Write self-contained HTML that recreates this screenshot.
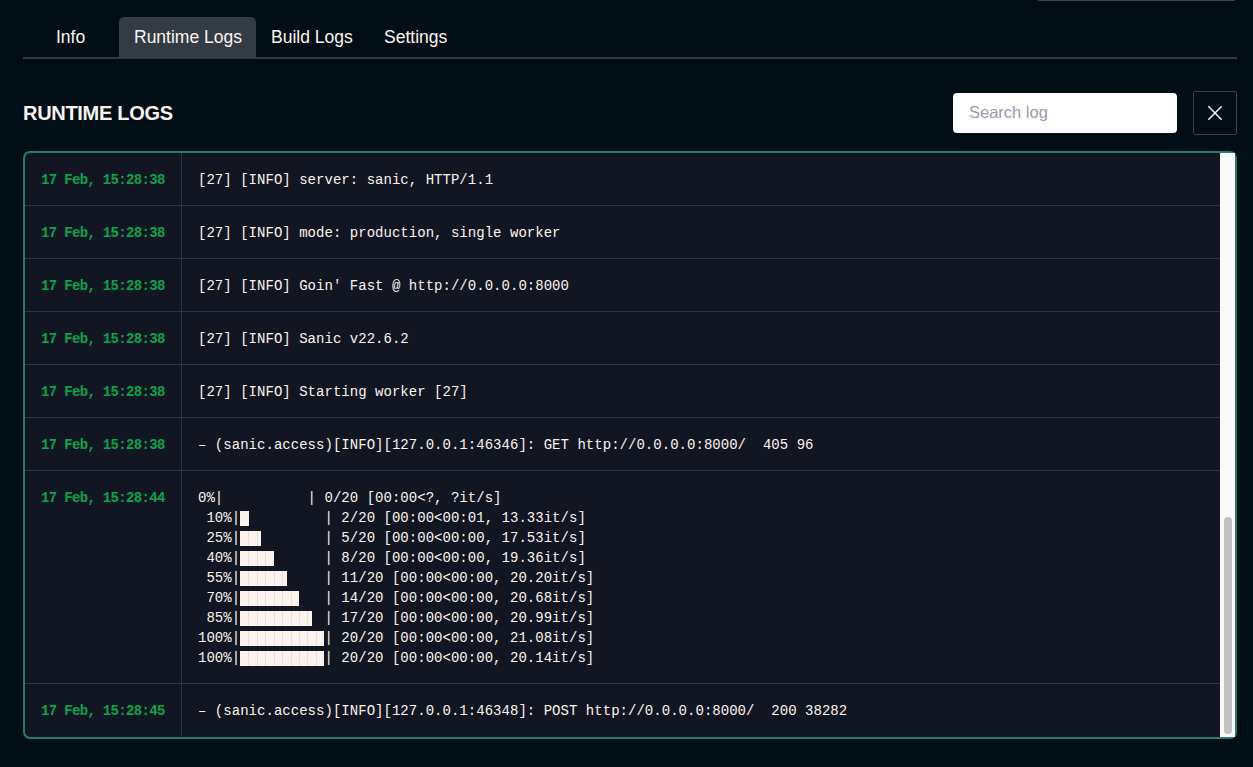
<!DOCTYPE html>
<html>
<head>
<meta charset="utf-8">
<style>
*{box-sizing:border-box;margin:0;padding:0}
html,body{width:1253px;height:767px;overflow:hidden;background:#010e16;font-family:"Liberation Sans",sans-serif;color:#fff}
.abs{position:absolute}
#topbox{left:1037px;top:-40px;width:199px;height:41px;border:1px solid #3a4550;border-radius:2px}
.tabline{left:23px;top:57px;width:1214px;height:2px;background:#2f3944}
.tab{top:17px;height:41px;font-size:16.5px;line-height:41px;color:#fff;white-space:nowrap}
.tt{top:17px;height:41px;font-size:17.5px;line-height:41px;color:#fdf3ee;white-space:nowrap}
.tab.active{background:#333b45;border-radius:5px 5px 0 0}
h2{position:absolute;left:23px;top:101px;font-size:20px;font-weight:bold;line-height:24px;color:#fdf3ee;letter-spacing:-0.3px}
#search{left:953px;top:93px;width:224px;height:40px;background:#fff;border-radius:4px;font-size:16.5px;color:#949cab;line-height:38px;padding-left:16px}
#close{left:1193px;top:91px;width:44px;height:44px;border:1px solid #39424c;border-radius:2px}
#logs{left:23px;top:151px;width:1214px;height:588px;border:2px solid #267f64;border-radius:7px;background:#111622;overflow:hidden}
.row{position:absolute;left:0;width:1195px;border-bottom:1px solid #2d3542}
.ts{position:absolute;left:16px;top:17px;font-family:"Liberation Mono",monospace;font-weight:bold;font-size:14px;letter-spacing:-0.67px;line-height:20px;color:#0ca34a;white-space:pre}
.msg{position:absolute;left:173px;top:16.5px;font-family:"Liberation Mono",monospace;font-size:14px;line-height:20px;color:#fdf3ee;white-space:pre;letter-spacing:0.03px}
.vline{position:absolute;left:156px;top:0;width:1px;height:584px;background:#2d3542}
#track{left:1220px;top:153px;width:15px;height:584px;background:#fafafa}
#thumb{left:1224px;top:517px;width:8px;height:217px;background:#c1c1c1;border-radius:4px}
.bar{display:inline-block;width:84.3px;height:14.5px;vertical-align:-4px;position:relative}.b{position:absolute;left:0;top:0;height:14.5px;background:#fdf3ee}.sm{position:absolute;top:0;width:1px;height:100%;background:#e9e1dd}
</style>
</head>
<body>
<div class="abs" id="topbox"></div>
<div class="abs tabline"></div>
<div class="abs tab active" style="left:119px;width:137px"></div>
<div class="abs tt" style="left:56px">Info</div>
<div class="abs tt" style="left:134px">Runtime Logs</div>
<div class="abs tt" style="left:271px">Build Logs</div>
<div class="abs tt" style="left:384px">Settings</div>

<h2>RUNTIME LOGS</h2>
<div class="abs" id="search">Search log</div>
<div class="abs" id="close">
<svg width="44" height="44" viewBox="0 0 44 44" style="position:absolute;left:-1px;top:-1px"><path d="M15.3 15.3L28.7 28.7M28.7 15.3L15.3 28.7" stroke="#fdf3ee" stroke-width="1.5" fill="none"/></svg>
</div>

<div class="abs" id="logs">
<div class="row" style="top:0;height:53px"><div class="ts">17 Feb, 15:28:38</div><div class="msg">[27] [INFO] server: sanic, HTTP/1.1</div></div>
<div class="row" style="top:53px;height:53px"><div class="ts">17 Feb, 15:28:38</div><div class="msg">[27] [INFO] mode: production, single worker</div></div>
<div class="row" style="top:106px;height:53px"><div class="ts">17 Feb, 15:28:38</div><div class="msg">[27] [INFO] Goin' Fast @ http://0.0.0.0:8000</div></div>
<div class="row" style="top:159px;height:53px"><div class="ts">17 Feb, 15:28:38</div><div class="msg">[27] [INFO] Sanic v22.6.2</div></div>
<div class="row" style="top:212px;height:53px"><div class="ts">17 Feb, 15:28:38</div><div class="msg">[27] [INFO] Starting worker [27]</div></div>
<div class="row" style="top:265px;height:53px"><div class="ts">17 Feb, 15:28:38</div><div class="msg">– (sanic.access)[INFO][127.0.0.1:46346]: GET http://0.0.0.0:8000/  405 96</div></div>
<div class="row" style="top:318px;height:213px"><div class="ts">17 Feb, 15:28:44</div><div class="msg">0%|          | 0/20 [00:00&lt;?, ?it/s]
 10%|<span class="bar"><span class="b" style="width:8.43px"></span></span>| 2/20 [00:00&lt;00:01, 13.33it/s]
 25%|<span class="bar"><span class="b" style="width:21.07px"><i class="sm" style="left:8px"></i><i class="sm" style="left:17px"></i></span></span>| 5/20 [00:00&lt;00:00, 17.53it/s]
 40%|<span class="bar"><span class="b" style="width:33.72px"><i class="sm" style="left:8px"></i><i class="sm" style="left:17px"></i><i class="sm" style="left:25px"></i></span></span>| 8/20 [00:00&lt;00:00, 19.36it/s]
 55%|<span class="bar"><span class="b" style="width:46.36px"><i class="sm" style="left:8px"></i><i class="sm" style="left:17px"></i><i class="sm" style="left:25px"></i><i class="sm" style="left:34px"></i><i class="sm" style="left:42px"></i></span></span>| 11/20 [00:00&lt;00:00, 20.20it/s]
 70%|<span class="bar"><span class="b" style="width:59.01px"><i class="sm" style="left:8px"></i><i class="sm" style="left:17px"></i><i class="sm" style="left:25px"></i><i class="sm" style="left:34px"></i><i class="sm" style="left:42px"></i><i class="sm" style="left:51px"></i></span></span>| 14/20 [00:00&lt;00:00, 20.68it/s]
 85%|<span class="bar"><span class="b" style="width:71.66px"><i class="sm" style="left:8px"></i><i class="sm" style="left:17px"></i><i class="sm" style="left:25px"></i><i class="sm" style="left:34px"></i><i class="sm" style="left:42px"></i><i class="sm" style="left:51px"></i><i class="sm" style="left:59px"></i><i class="sm" style="left:67px"></i></span></span>| 17/20 [00:00&lt;00:00, 20.99it/s]
100%|<span class="bar"><span class="b" style="width:84.30px"><i class="sm" style="left:8px"></i><i class="sm" style="left:17px"></i><i class="sm" style="left:25px"></i><i class="sm" style="left:34px"></i><i class="sm" style="left:42px"></i><i class="sm" style="left:51px"></i><i class="sm" style="left:59px"></i><i class="sm" style="left:67px"></i><i class="sm" style="left:76px"></i></span></span>| 20/20 [00:00&lt;00:00, 21.08it/s]
100%|<span class="bar"><span class="b" style="width:84.30px"><i class="sm" style="left:8px"></i><i class="sm" style="left:17px"></i><i class="sm" style="left:25px"></i><i class="sm" style="left:34px"></i><i class="sm" style="left:42px"></i><i class="sm" style="left:51px"></i><i class="sm" style="left:59px"></i><i class="sm" style="left:67px"></i><i class="sm" style="left:76px"></i></span></span>| 20/20 [00:00&lt;00:00, 20.14it/s]</div></div>
<div class="row" style="top:531px;height:53px;border-bottom:none"><div class="ts">17 Feb, 15:28:45</div><div class="msg">– (sanic.access)[INFO][127.0.0.1:46348]: POST http://0.0.0.0:8000/  200 38282</div></div>
<div class="vline"></div>
</div>
<div class="abs" id="track"></div>
<div class="abs" id="thumb"></div>
</body>
</html>
